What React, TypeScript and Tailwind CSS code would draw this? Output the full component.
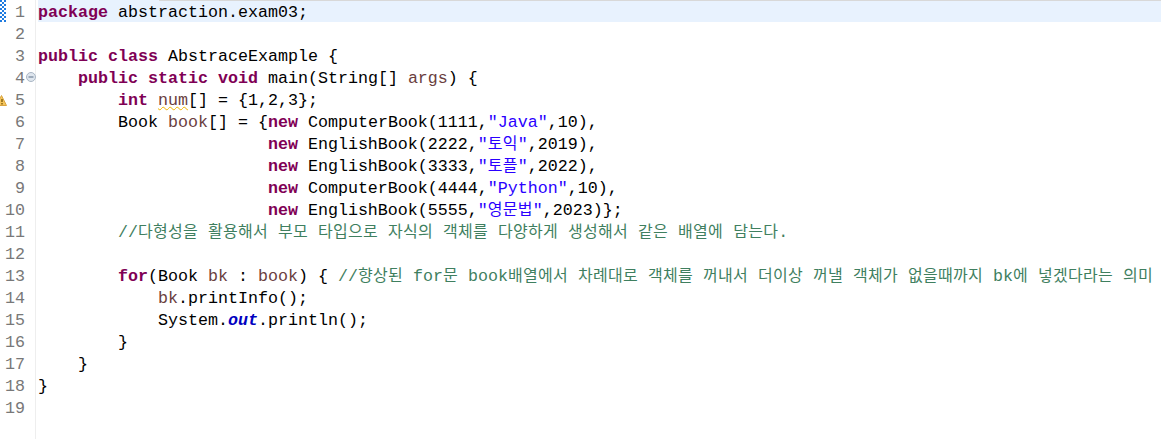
import React from "react";

const K = ({ children }: { children: React.ReactNode }) => <span className="font-bold text-[#7f0055]">{children}</span>;
const V = ({ children }: { children: React.ReactNode }) => <span className="text-[#6a3e3e]">{children}</span>;
const S = ({ children }: { children: React.ReactNode }) => <span className="text-[#2a00ff]">{children}</span>;

// hangul takes 15px a cell, spaces stay on the 10px mono grid
const H = ({ t }: { t: string }) => (
  <>
    {t.split(/( )/).map((part, i) =>
      part === " " ? (
        " "
      ) : (
        <span key={i} className="font-['Noto_Sans_CJK_KR',sans-serif] text-[16px] leading-[0] tracking-[0.28px]">
          {part}
        </span>
      )
    )}
  </>
);

const lines: React.ReactNode[] = [
  <><K>package</K> abstraction.exam03;</>,
  "",
  <><K>public</K> <K>class</K> AbstraceExample {"{"}</>,
  <>    <K>public</K> <K>static</K> <K>void</K> main(String[] <V>args</V>) {"{"}</>,
  <>        <K>int</K> <span className="text-[#6a3e3e] underline decoration-wavy decoration-[#f0b400] decoration-1">num</span>[] = {"{"}1,2,3{"}"};</>,
  <>        Book <V>book</V>[] = {"{"}<K>new</K> ComputerBook(1111,<S>"Java"</S>,10),</>,
  <>                       <K>new</K> EnglishBook(2222,<S>"<H t="토익" />"</S>,2019),</>,
  <>                       <K>new</K> EnglishBook(3333,<S>"<H t="토플" />"</S>,2022),</>,
  <>                       <K>new</K> ComputerBook(4444,<S>"Python"</S>,10),</>,
  <>                       <K>new</K> EnglishBook(5555,<S>"<H t="영문법" />"</S>,2023){"}"};</>,
  <>        <span className="text-[#3f7f5f]">//<H t="다형성을 활용해서 부모 타입으로 자식의 객체를 다양하게 생성해서 같은 배열에 담는다" />.</span></>,
  "",
  <>        <K>for</K>(Book <V>bk</V> : <V>book</V>) {"{"} <span className="text-[#3f7f5f]">//<H t="향상된" /> for<H t="문" /> book<H t="배열에서 차례대로 객체를 꺼내서 더이상 꺼낼 객체가 없을때까지" /> bk<H t="에 넣겠다라는 의미" /></span></>,
  <>            <V>bk</V>.printInfo();</>,
  <>            System.<span className="font-bold italic text-[#0000c0]">out</span>.println();</>,
  <>        {"}"}</>,
  <>    {"}"}</>,
  <>{"}"}</>,
  "",
];

function Row({ n, children }: { n: number; children: React.ReactNode }) {
  return (
    <div className="flex h-[22px] leading-[26px]">
      <div className="relative w-[36px] shrink-0 border-r border-[#eeeeee]">
        <div className="w-[25px] text-right text-[#787878]">{n}</div>
        {n === 1 && (
          <svg className="absolute left-0 top-0" width="6" height="22">
            <defs>
              <pattern id="hatch" width="4" height="4" patternUnits="userSpaceOnUse">
                <rect width="4" height="4" fill="#ffffff" />
                <rect width="2" height="2" fill="#1f7be0" />
                <rect x="2" y="2" width="2" height="2" fill="#1f7be0" />
              </pattern>
            </defs>
            <rect width="6" height="22" fill="url(#hatch)" />
          </svg>
        )}
        {n === 4 && (
          <svg className="absolute left-[26px] top-[6px]" width="10" height="10" viewBox="0 0 10 10">
            <circle cx="5" cy="5" r="4.5" fill="#dfe6ee" stroke="#a9b6c4" />
            <path d="M2.5 5h5" stroke="#5a6f86" />
          </svg>
        )}
        {n === 5 && (
          <svg className="absolute left-0 top-[7px]" width="7" height="11" viewBox="0 0 7 11">
            <path d="M1.5 0.5 L6.5 10.5 H-4 Z" fill="#f5c55b" stroke="#d9a441" />
            <path d="M2 4v3M2 8v1.5" stroke="#6b4a00" strokeWidth="1.2" />
          </svg>
        )}
      </div>
      <div className={`ml-[2px] flex-1 whitespace-pre ${n === 1 ? "bg-[#e8f2fe]" : ""}`}>{children}</div>
    </div>
  );
}

export default function App() {
  return (
    <div className="relative h-[439px] w-[1161px] overflow-hidden bg-white font-['Liberation_Mono',monospace] text-[16.67px] text-black">
      {/* bit of the tab bar shadow on top of the editor */}
      <div className="absolute left-[159px] right-0 top-0 h-px bg-[#d8d8d8]" />
      {lines.map((line, i) => (
        <Row key={i} n={i + 1}>
          {line}
        </Row>
      ))}
      <div className="h-[22px] w-[36px] border-r border-[#eeeeee]" />
    </div>
  );
}
